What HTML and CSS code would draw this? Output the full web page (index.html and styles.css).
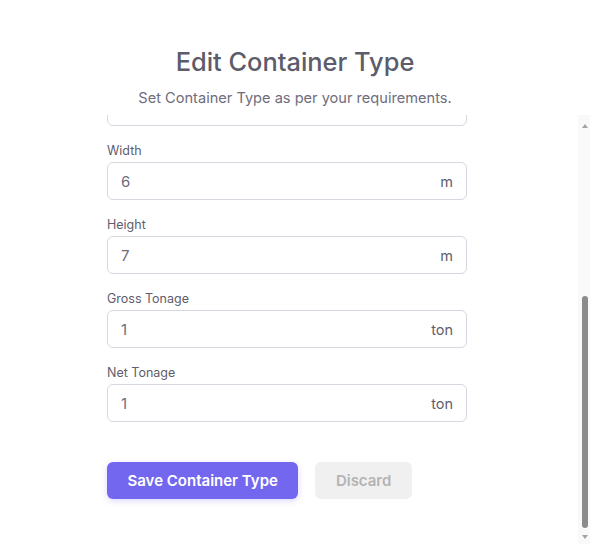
FILE: index.html
```html
<!DOCTYPE html>
<html lang="en">
<head>
<meta charset="utf-8">
<title>Edit Container Type</title>
<link rel="stylesheet" href="styles.css">
</head>
<body>
<div class="modal">
  <header class="modal-header">
    <h1 class="title">Edit Container Type</h1>
    <p class="subtitle">Set Container Type as per your requirements.</p>
  </header>
  <div class="scroll-area">
    <form class="form">
      <div class="field">
        <div class="input input-partial"></div>
      </div>
      <div class="field">
        <label class="label">Width</label>
        <div class="input"><span class="value">6</span><span class="unit">m</span></div>
      </div>
      <div class="field">
        <label class="label">Height</label>
        <div class="input"><span class="value">7</span><span class="unit">m</span></div>
      </div>
      <div class="field">
        <label class="label">Gross Tonage</label>
        <div class="input"><span class="value">1</span><span class="unit">ton</span></div>
      </div>
      <div class="field">
        <label class="label">Net Tonage</label>
        <div class="input"><span class="value">1</span><span class="unit">ton</span></div>
      </div>
      <div class="actions">
        <button type="button" class="btn btn-primary">Save Container Type</button>
        <button type="button" class="btn btn-muted">Discard</button>
      </div>
    </form>
    <div class="scrollbar" aria-hidden="true">
      <div class="sb-btn sb-up"><span class="arrow arrow-up"></span></div>
      <div class="sb-track"><div class="sb-thumb"></div></div>
      <div class="sb-btn sb-down"><span class="arrow arrow-down"></span></div>
    </div>
  </div>
</div>
</body>
</html>
```

FILE: styles.css
```css
* { box-sizing: border-box; }

html, body {
  margin: 0;
  padding: 0;
  background: #ffffff;
}

body {
  font-family: Inter, "Noto Sans", "DejaVu Sans", sans-serif;
  width: 590px;
  height: 544px;
  overflow: hidden;
}

.modal {
  display: flex;
  flex-direction: column;
  height: 544px;
}

.modal-header {
  padding-top: 46px;
  text-align: center;
}

.title {
  margin: 0;
  font-size: 25.4px;
  line-height: 31px;
  font-weight: 500;
  color: #5d5c6a;
}

.subtitle {
  margin: 11px 0 0;
  font-size: 14.6px;
  line-height: 20px;
  color: #6e6d7b;
}

.scroll-area {
  position: relative;
  margin-top: 7px;
  height: 429px;
  overflow: hidden;
  display: flex;
  flex-direction: column;
  justify-content: flex-end;
}

.form {
  width: 360px;
  margin-left: 107px;
  padding-bottom: 45px;
}

.field {
  margin-bottom: 16px;
}

.label {
  display: block;
  font-size: 12.5px;
  line-height: 18px;
  margin-bottom: 2px;
  color: #5e5d6b;
}

.input {
  height: 38px;
  border: 1px solid #d8d6de;
  border-radius: 6px;
  display: flex;
  align-items: center;
  justify-content: space-between;
  padding: 0 13px 0 13px;
  font-size: 15px;
}

.value {
  color: #6e6d7b;
}

.unit {
  color: #5e5d6b;
  font-size: 14.5px;
}

.actions {
  margin-top: 40px;
  display: flex;
  gap: 17px;
}

.btn {
  height: 37px;
  border: none;
  border-radius: 6px;
  font-family: inherit;
  font-size: 15px;
  font-weight: 600;
  padding: 0 20.5px;
  cursor: pointer;
}

.btn-primary {
  background: #7367f0;
  color: #ffffff;
  box-shadow: 0 2px 6px rgba(115, 103, 240, 0.25);
}

.btn-muted {
  background: #f0f0f0;
  color: #b4b4b4;
}

/* decorative scrollbar overlay */
.scrollbar {
  position: absolute;
  top: 0;
  right: 0;
  bottom: 0;
  width: 12px;
  background: #f9f9f9;
  display: flex;
  flex-direction: column;
}

.sb-btn {
  height: 16px;
  flex: none;
  padding-left: 4px;
}

.sb-up { padding-top: 9px; }
.sb-down { padding-top: 7px; }

.arrow {
  display: block;
  width: 0;
  height: 0;
  border-left: 3.5px solid transparent;
  border-right: 3.5px solid transparent;
}

.arrow-up { border-bottom: 4px solid #a3a3a3; }
.arrow-down { border-top: 4px solid #a3a3a3; }

.sb-track {
  flex: 1;
  display: flex;
  flex-direction: column;
  justify-content: flex-end;
  padding: 0 2px 0 4px;
}

.sb-thumb {
  height: 232px;
  background: #8b8b8b;
  border-radius: 3px;
}
```
